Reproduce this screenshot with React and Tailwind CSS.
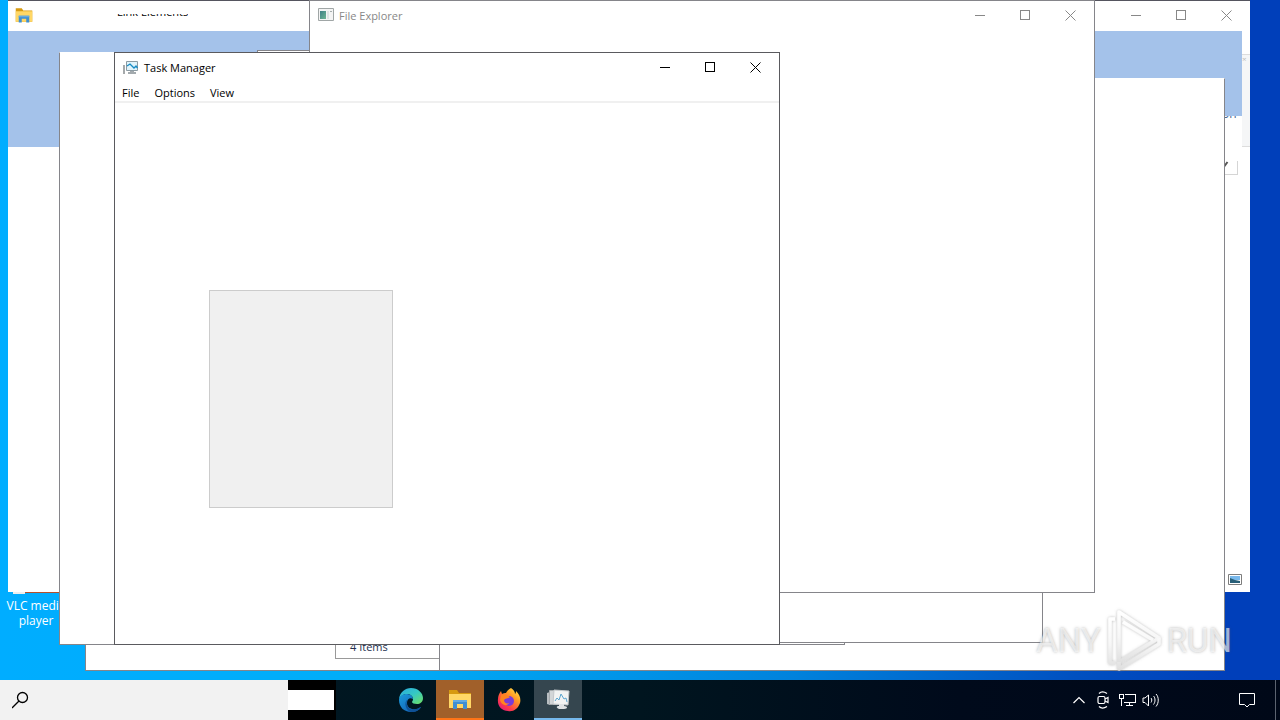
import React from "react";

const FONT = "font-['Open_Sans','Noto_Sans',sans-serif]";

function Controls({ tone = "text-black" }) {
  const cls = "flex h-[28px] w-[45px] items-center justify-center";
  return (
    <div className={`mr-[1px] ml-auto flex self-start ${tone}`}>
      <button aria-label="Minimize" className={cls}>
        <svg width="11" height="11" viewBox="0 0 11 11" stroke="currentColor" fill="none" shapeRendering="crispEdges"><path d="M0 5.5h10" /></svg>
      </button>
      <button aria-label="Maximize" className={cls}>
        <svg width="11" height="11" viewBox="0 0 11 11" stroke="currentColor" fill="none" shapeRendering="crispEdges"><path d="M.5 .5h9v9h-9z" /></svg>
      </button>
      <button aria-label="Close" className={cls}>
        <svg width="11" height="11" viewBox="0 0 11 11" stroke="currentColor" fill="none"><path d="M.5 .5l10 10M10.5 .5l-10 10" /></svg>
      </button>
    </div>
  );
}

function FolderIcon({ size = 18 }) {
  return (
    <svg width={size} height={size} viewBox="0 0 24 24">
      <path d="M1 3h8l2 3h12v15H1z" fill="#d79a10" />
      <path d="M1 7h22v14H1z" fill="#ffd766" />
      <path d="M5 22v-9h14v9h-4v-5H9v5z" fill="#3f8fd2" />
      <path d="M5 13h14v2H5z" fill="#62abe3" />
    </svg>
  );
}

function AppIcon() {
  return (
    <svg width="16" height="14" viewBox="0 0 16 14">
      <defs>
        <linearGradient id="appPane" x1="0" y1="0" x2="1" y2="1"><stop stopColor="#3f8086" /><stop offset="1" stopColor="#6fb594" /></linearGradient>
      </defs>
      <path d="M.5 .5h15v12H.5z" fill="#f4f4f4" stroke="#a0a6a6" />
      <path d="M2 3h6v8H2z" fill="url(#appPane)" />
      <path d="M9 3h2v8H9z" fill="#dfe3e3" />
      <path d="M12 3h2v1h-2z" fill="#a6adad" />
    </svg>
  );
}

function TaskManagerIcon() {
  return (
    <svg width="17" height="15" viewBox="0 0 17 15" fill="none">
      <path d="M1 5h2v9H1z" fill="#a5a9ab" />
      <path d="M4.500 1.500h11v9h-11z" fill="#dff3fb" stroke="#8c9ba3" />
      <path d="M5 6l3-2 4 4 2-2 1.500 2" stroke="#168bc4" strokeWidth="1.300" />
      <path d="M8 11h4v1h2v2H6v-2h2z" fill="#a3aaae" />
    </svg>
  );
}

function TaskManagerLarge() {
  return (
    <svg width="26" height="26" viewBox="0 0 26 26" fill="none">
      <path d="M2 7l3-1v13l-3-1z" fill="#b9bec1" />
      <path d="M4.500 4.500h12v14h-12z" fill="#d3d6d8" stroke="#a4a9ac" />
      <path d="M9 4l15 1-1 14-15-1z" fill="#f2f3f3" stroke="#c3c7ca" />
      <path d="M10 15l2-3 2 2 2-6 3 5 2-1 1 4" stroke="#5ca5cf" />
      <path d="M14 18h5v2c4 0 4 3 0 3h-5c-3-1-3-3 0-3z" fill="#dfe2e4" />
    </svg>
  );
}

function EdgeIcon() {
  return (
    <svg width="26" height="26" viewBox="0 0 26 26">
      <defs>
        <linearGradient id="edgeTop" x1="0" y1="0" x2="1" y2="1"><stop stopColor="#2aa9e0" /><stop offset=".5" stopColor="#35c8c4" /><stop offset="1" stopColor="#6fe060" /></linearGradient>
        <linearGradient id="edgeBody" x1="0" y1="0" x2="1" y2="1"><stop stopColor="#1b9bdc" /><stop offset="1" stopColor="#1156ac" /></linearGradient>
      </defs>
      <path d="M1 12C2 5 7 1 13 1c7 0 12 5 12 10 0 4-3 6-6 6-3 0-5-1-5-2 0-1 1-1 1-3 0-3-3-5-6-5-4 0-7 3-8 5z" fill="url(#edgeTop)" />
      <path d="M1 13c0-4 4-6 8-6 4 0 6 3 6 5-3-2-6 0-6 4 0 5 5 7 9 6 2 0 4-2 5-2-2 4-6 5-10 5C6 25 1 20 1 13z" fill="url(#edgeBody)" />
      <path d="M10 12c-2 2-2 6 1 9 3 3 9 1 12-1-2 4-6 5-10 5-5-1-8-10-3-13z" fill="#0f5196" />
    </svg>
  );
}

function FirefoxIcon() {
  return (
    <svg width="26" height="26" viewBox="0 0 26 26">
      <defs>
        <linearGradient id="fox" x1="1" y1="0" x2=".2" y2="1"><stop stopColor="#fff04d" /><stop offset=".4" stopColor="#ff9a24" /><stop offset=".75" stopColor="#ff3d48" /><stop offset="1" stopColor="#e21b77" /></linearGradient>
      </defs>
      <path d="M15 1c3 2 4 4 4 6 1-1 1-2 1-3 4 4 5 8 4 12-2 6-7 9-12 8C6 24 1 19 2 12c0-3 1-5 3-8l1 3c1-1 3-1 4-1 1-2 3-4 5-5z" fill="url(#fox)" />
      <circle cx="13" cy="14" r="5" fill="#7a3bd8" />
      <path d="M5 8c4-2 6 0 9 2-2 2-5 1-6 3 0 3 3 4 5 3-2 4-8 2-9-3z" fill="#ff8420" />
    </svg>
  );
}

function Blank({ place, children }) {
  return (
    <section className={`absolute flex h-[593px] w-[786px] flex-col border border-[#85858a] bg-white ${place}`}>
      {children}
    </section>
  );
}

function Watermark() {
  return (
    <div className="pointer-events-none absolute right-[48px] bottom-[4px] flex h-[70px] items-center gap-[2px] text-[33px] leading-[70px] text-white/60 [text-shadow:0_0_3px_rgba(90,90,90,0.45)] font-['Roboto',sans-serif]">
      <span>ANY</span>
      <svg width="62" height="70" viewBox="0 0 62 70" aria-hidden="true">
        <defs>
          <linearGradient id="mark" x1="0" y1="0" x2="0" y2="1"><stop stopColor="#fff" /><stop offset=".5" stopColor="#f7f7f7" /><stop offset="1" stopColor="#e0e0e0" /></linearGradient>
          <filter id="soft" x="-20%" y="-20%" width="140%" height="140%"><feDropShadow dx="0" dy="0" stdDeviation="1.5" floodColor="#777" floodOpacity=".5" /></filter>
        </defs>
        <g filter="url(#soft)" fill="none" stroke="url(#mark)" strokeWidth="3.500" strokeLinejoin="round">
          <path d="M16 6v50l40-24z" />
          <path d="M12 13H7v44h5M16 56v7l40-25v-6M20 16l30 18" />
        </g>
      </svg>
      <span>RUN</span>
    </div>
  );
}

export default function App() {
  return (
    <main className={`relative flex h-screen min-h-[720px] w-full flex-col overflow-hidden bg-[linear-gradient(90deg,#00adff_0%,#00adf8_30%,#0082dc_62%,#0050c0_84%,#003fba_96%)] text-[11px] leading-[15px] ${FONT}`}>
      <div className="relative flex-1 overflow-hidden">
        <div className="absolute top-[559px] left-[4px] flex w-[64px] flex-col items-center text-center text-[12px] text-white">
          <svg width="46" height="39" viewBox="0 0 46 39"><path d="M18 0h10l10 30H8z" fill="#e87512" /><path d="M0 29h46v5H0z" fill="#b5502b" /><path d="M0 29h12v6H0z" fill="#eee" /></svg>
          <span className="whitespace-nowrap">VLC media<br />player</span>
        </div>

        <section className="absolute top-0 left-[8px] flex h-[592px] w-[1242px] flex-col border-t border-[#55555f] bg-white">
          <header className="flex h-[30px] shrink-0 items-start">
            <div className="flex h-[28px] w-[109px] items-center pl-[7px]"><FolderIcon /></div>
            <div className="mt-[13px] flex h-[2px] items-end overflow-hidden whitespace-nowrap text-black"><span className="-mb-[3px]">Link Elements</span></div>
            <Controls tone="text-[#888]" />
          </header>
          <div className="flex h-[116px] shrink-0">
            <div className="flex-1 bg-[#a4c2ea]" />
            <div className="flex w-[26px] flex-col overflow-hidden">
              <div className="h-[85px] shrink-0 bg-[#a4c2ea]" />
              <span className="-mt-[10px] h-[15px] pl-[6px] text-[12px] text-[#44618b] [clip-path:inset(10px_0_0_0)]">on</span>
            </div>
            <div className="mt-[23px] w-[8px] border-y border-[#ddd] bg-[#f5f6f7] text-[8px] leading-[8px] text-[#bbb]">×</div>
          </div>
          <div className="mt-[14px] mr-[12px] ml-auto flex h-[14px] w-[18px] items-start border-r border-b border-[#d5d5d5] text-[#555]">
            <svg width="10" height="8" viewBox="0 0 10 8" fill="none" stroke="currentColor" strokeWidth="2"><path d="M2 5h2.500l3-4" /></svg>
          </div>
          <div className="mt-auto mr-[8px] mb-[7px] ml-auto">
            <svg width="14" height="11" viewBox="0 0 14 11"><path d="M.5 .5h13v10H.5z" fill="#fff" stroke="#7d7d7d" /><path d="M2 2h10v4H2z" fill="#79b9ec" /><path d="M2 4l5 2 5 1v2H2z" fill="#285f78" /></svg>
          </div>
        </section>

        <Blank place="left-[85px] top-[78px]">
          <div className="mt-auto mb-[11px] ml-[249px] h-[24px] border-b border-l border-[#999] pl-[14px] leading-[24px] text-[#24304f]">4 Items</div>
        </Blank>
        <Blank place="left-[439px] top-[78px] border-t-white" />
        <Blank place="left-[59px] top-[52px] border-t-white" />
        <Blank place="left-[257px] top-[50px]" />
        <Blank place="left-[309px] top-0">
          <header className="flex h-[28px] items-center pl-[8px]">
            <AppIcon />
            <h2 className="pl-[5px] text-[#888]">File Explorer</h2>
            <Controls tone="text-[#888]" />
          </header>
        </Blank>

        <section className="absolute top-[52px] left-[114px] flex h-[593px] w-[666px] flex-col border border-[#5a5a5e] bg-white text-black">
          <header className="flex h-[30px] items-center pb-[2px] pl-[7px]">
            <TaskManagerIcon />
            <h1 className="pl-[5px]">Task Manager</h1>
            <Controls />
          </header>
          <nav className="flex h-[20px] items-center gap-[15px] border-b-2 border-[#f0f0f0] pl-[7px]">
            <button>File</button>
            <button>Options</button>
            <button>View</button>
          </nav>
          <div className="mt-[187px] ml-[94px] h-[218px] w-[184px] border border-[#ccc] bg-[#f0f0f0]" />
        </section>
        <Watermark />
      </div>

      <footer className="flex h-[40px] shrink-0 items-stretch bg-[linear-gradient(90deg,#001823_0%,#00151f_50%,#000a1b_75%,#000818_100%)] text-white">
        <label className="flex w-[288px] items-center bg-[#f2f2f2] pl-[12px] text-black">
          <svg width="18" height="18" viewBox="0 0 18 18" fill="none" stroke="currentColor" strokeWidth="1.3"><circle cx="10.5" cy="6.5" r="5" /><path d="M7 10l-7 7" /></svg>
          <input type="search" aria-label="Search" className="min-w-0 flex-1 bg-transparent outline-none" />
        </label>
        <div className="flex w-[48px] items-center bg-black"><div className="h-[20px] w-[46px] bg-white" /></div>
        <nav className="ml-[50px] flex">
          <button aria-label="Edge" className="flex w-[50px] items-center justify-center"><EdgeIcon /></button>
          <button aria-label="File Explorer" className="flex w-[48px] items-center justify-center border-b-2 border-[#ff7417] bg-[#a1602a]"><FolderIcon size={24} /></button>
          <button aria-label="Firefox" className="flex w-[50px] items-center justify-center"><FirefoxIcon /></button>
          <button aria-label="Task Manager" className="flex w-[48px] items-center justify-center border-b-2 border-[#76b9ed] bg-[#35464f]"><TaskManagerLarge /></button>
        </nav>
        <div className="ml-auto flex items-center">
          <button aria-label="Show hidden icons" className="flex w-[24px] justify-center"><svg width="12" height="8" viewBox="0 0 12 8" fill="none" stroke="currentColor" strokeWidth="1.2"><path d="M.5 7L6 1.500l5.500 5.500" /></svg></button>
          <button aria-label="Meet Now" className="flex w-[24px] justify-center"><svg width="14" height="18" viewBox="0 0 14 18" fill="none" stroke="currentColor" strokeWidth="1.200"><rect x="2" y="5.500" width="7" height="7" rx="1.500" /><path d="M9 8l3-1.500v5L9 10M3 2.500c2-2 5-2 8 0M3 15.500c2 2 5 2 8 0" /></svg></button>
          <button aria-label="Network" className="flex w-[24px] justify-center"><svg width="17" height="14" viewBox="0 0 17 14" fill="none" stroke="currentColor" shapeRendering="crispEdges"><path d="M5.500 1.500h11v8h-12M.5 1.500h4v4h-4zM2.500 5.500v7M10.500 9.500v3M7 12.500h7" /></svg></button>
          <button aria-label="Volume" className="flex w-[24px] justify-center"><svg width="18" height="14" viewBox="0 0 18 14" fill="none" stroke="currentColor"><path d="M1 5h2l3.500-3v11L3 9.500H1zM9 5c1 1 1 3 0 4.500M11.500 3c2 2 2 6 0 8.500M14 1c3 3 3 9 0 12.500" /></svg></button>
          <button aria-label="Notifications" className="ml-[72px] flex w-[24px] justify-center"><svg width="17" height="17" viewBox="0 0 17 17" fill="none" stroke="currentColor"><path d="M.5 1.500h15v11h-5L8 15l-2.500-2.500h-5z" /></svg></button>
          <button aria-label="Show desktop" className="ml-[16px] h-[40px] w-[5px] border-l border-[#5c6370]" />
        </div>
      </footer>
    </main>
  );
}
